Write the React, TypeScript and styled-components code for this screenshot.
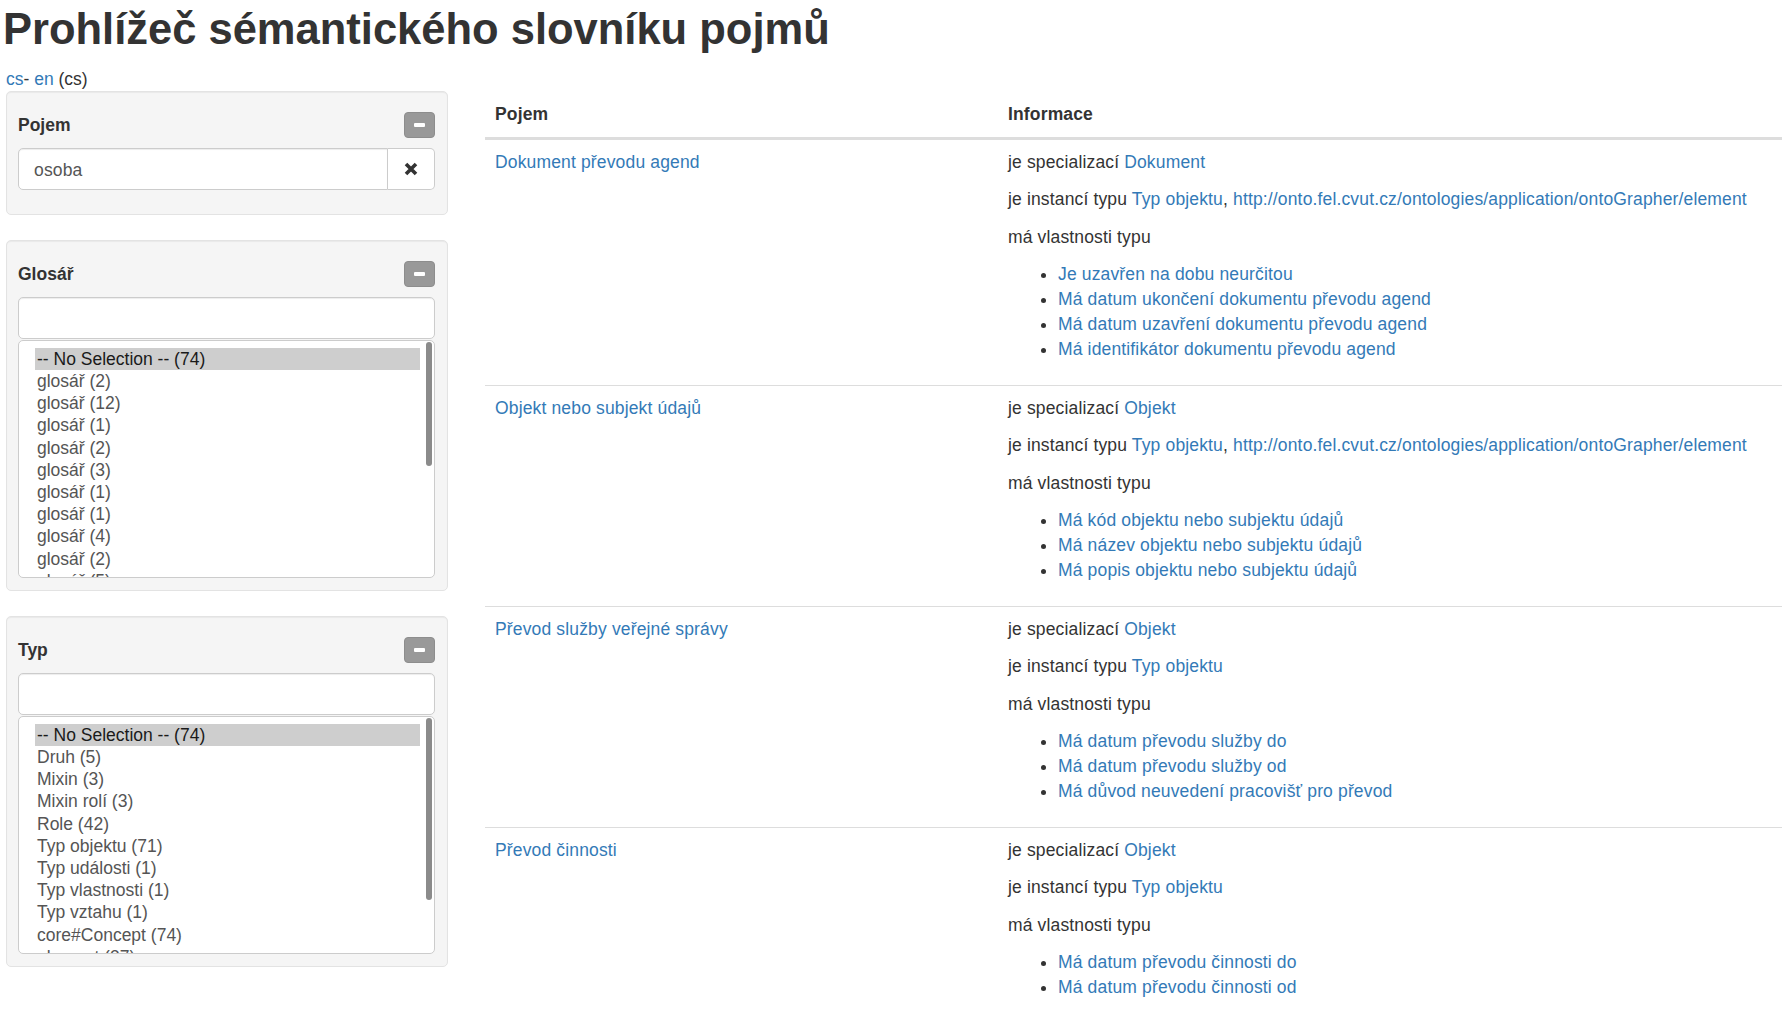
import React from "react";
import styled, { createGlobalStyle } from "styled-components";

const GlobalStyle = createGlobalStyle`
  html, body {
    margin: 0;
    padding: 0;
    background: #fff;
    overflow: hidden;
  }
  body {
    font-family: "Liberation Sans", Arial, Helvetica, sans-serif;
    font-size: 17.5px;
    line-height: 25px;
    color: #333;
  }
  * { box-sizing: border-box; }
`;

const Page = styled.div`
  padding-left: 6px;
`;

const Title = styled.h1`
  margin: 6px 0 13px -3px;
  font-size: 43.5px;
  font-weight: 700;
  line-height: 1.1;
  color: #333;
`;

const LangLine = styled.div`
  height: 24px;
  line-height: 25px;
`;

const Link = styled.a`
  color: #337ab7;
  text-decoration: none;
`;

const Layout = styled.div`
  display: grid;
  grid-template-columns: 442px 1fr;
  column-gap: 37px;
  align-items: start;
`;

const Sidebar = styled.aside`
  display: flex;
  flex-direction: column;
`;

const Well = styled.section`
  background: #f5f5f5;
  border: 1px solid #e3e3e3;
  border-radius: 5px;
  box-shadow: inset 0 1px 1px rgba(0, 0, 0, 0.05);
  padding: 20px 12px 12px 11px;
  margin-bottom: 25px;
`;

const WellHeader = styled.div`
  display: flex;
  justify-content: space-between;
  align-items: center;
  height: 26px;
  margin-bottom: 10px;
`;

const WellTitle = styled.h4`
  margin: 0;
  padding-top: 1px;
  font-size: 17.5px;
  font-weight: 700;
  line-height: 26px;
  color: #333;
`;

const CollapseButton = styled.button`
  width: 31px;
  height: 26px;
  padding: 0;
  border: 1px solid #8d8d8d;
  border-radius: 4px;
  background: #999;
  display: flex;
  align-items: center;
  justify-content: center;
`;

const MinusBar = styled.span`
  display: block;
  width: 11px;
  height: 4px;
  border-radius: 1px;
  background: #fff;
`;

const InputGroup = styled.div<{ $spaced?: boolean }>`
  display: flex;
  height: 42px;
  margin-bottom: ${(p) => (p.$spaced ? "12px" : "0")};
`;

const TextInput = styled.input<{ $grouped?: boolean }>`
  flex: 1;
  min-width: 0;
  height: 42px;
  padding: 3px 15px 0;
  border: 1px solid #ccc;
  border-radius: ${(p) => (p.$grouped ? "5px 0 0 5px" : "5px")};
  background: #fff;
  box-shadow: inset 0 1px 1px rgba(0, 0, 0, 0.075);
  font-family: inherit;
  font-size: 17.5px;
  letter-spacing: 0.15px;
  color: #555;
  outline: none;
`;

const ClearButton = styled.button`
  width: 47px;
  height: 42px;
  padding: 0;
  border: 1px solid #ccc;
  border-left: none;
  border-radius: 0 5px 5px 0;
  background: #fff;
  display: flex;
  align-items: center;
  justify-content: center;
`;

const Listbox = styled.div`
  position: relative;
  height: 238px;
  margin-top: 1px;
  padding: 7px 14px 0 16px;
  border: 1px solid #ccc;
  border-radius: 5px;
  background: #fff;
  overflow: hidden;
`;

const Option = styled.div<{ $selected?: boolean }>`
  font-size: 17.5px;
  line-height: 22.2px;
  padding: 0 2px;
  height: 22.2px;
  white-space: nowrap;
  color: ${(p) => (p.$selected ? "#1a1a1a" : "#555")};
  background: ${(p) => (p.$selected ? "#cecece" : "transparent")};
`;

const ScrollThumb = styled.div<{ $height: number }>`
  position: absolute;
  top: 1px;
  right: 2px;
  width: 6px;
  height: ${(p) => p.$height}px;
  border-radius: 3px;
  background: #8b8b8b;
`;

const Table = styled.table`
  width: 100%;
  margin-top: 1px;
  border-collapse: collapse;
  table-layout: fixed;
  letter-spacing: 0.15px;
`;

const HeadCell = styled.th<{ $width?: number }>`
  width: ${(p) => (p.$width ? `${p.$width}px` : "auto")};
  text-align: left;
  font-weight: 700;
  line-height: 25px;
  padding: 10px 10px;
  border-bottom: 3px solid #ddd;
  vertical-align: bottom;
`;

const Cell = styled.td`
  padding: 10px 10px;
  line-height: 25px;
  border-top: 1px solid #ddd;
  vertical-align: top;
`;

const InfoLine = styled.p`
  margin: 0 0 12.5px;
  white-space: nowrap;
`;

const PropList = styled.ul`
  margin: 0 0 12.5px;
  padding-left: 50px;
`;

const RemoveIcon = () => (
  <svg width="14" height="14" viewBox="0 0 14 14" aria-hidden="true">
    <path d="M2 2 L12 12 M12 2 L2 12" stroke="#333" strokeWidth="3.6" strokeLinecap="butt" />
  </svg>
);

type Concept = {
  name: string;
  spec: string;
  inst: string[];
  props: string[];
};

const URL = "http://onto.fel.cvut.cz/ontologies/application/ontoGrapher/element";

const concepts: Concept[] = [
  {
    name: "Dokument převodu agend",
    spec: "Dokument",
    inst: ["Typ objektu", URL],
    props: [
      "Je uzavřen na dobu neurčitou",
      "Má datum ukončení dokumentu převodu agend",
      "Má datum uzavření dokumentu převodu agend",
      "Má identifikátor dokumentu převodu agend",
    ],
  },
  {
    name: "Objekt nebo subjekt údajů",
    spec: "Objekt",
    inst: ["Typ objektu", URL],
    props: [
      "Má kód objektu nebo subjektu údajů",
      "Má název objektu nebo subjektu údajů",
      "Má popis objektu nebo subjektu údajů",
    ],
  },
  {
    name: "Převod služby veřejné správy",
    spec: "Objekt",
    inst: ["Typ objektu"],
    props: [
      "Má datum převodu služby do",
      "Má datum převodu služby od",
      "Má důvod neuvedení pracovišť pro převod",
    ],
  },
  {
    name: "Převod činnosti",
    spec: "Objekt",
    inst: ["Typ objektu"],
    props: ["Má datum převodu činnosti do", "Má datum převodu činnosti od"],
  },
];

const glossaries = [
  "-- No Selection -- (74)",
  "glosář (2)",
  "glosář (12)",
  "glosář (1)",
  "glosář (2)",
  "glosář (3)",
  "glosář (1)",
  "glosář (1)",
  "glosář (4)",
  "glosář (2)",
  "glosář (5)",
];

const types = [
  "-- No Selection -- (74)",
  "Druh (5)",
  "Mixin (3)",
  "Mixin rolí (3)",
  "Role (42)",
  "Typ objektu (71)",
  "Typ události (1)",
  "Typ vlastnosti (1)",
  "Typ vztahu (1)",
  "core#Concept (74)",
  "element (37)",
];

const FilterWell = ({ title, items, thumb }: { title: string; items: string[]; thumb: number }) => (
  <Well>
    <WellHeader>
      <WellTitle>{title}</WellTitle>
      <CollapseButton aria-label="Sbalit">
        <MinusBar />
      </CollapseButton>
    </WellHeader>
    <InputGroup>
      <TextInput />
    </InputGroup>
    <Listbox role="listbox">
      {items.map((it, i) => (
        <Option key={i} $selected={i === 0} role="option">
          {it}
        </Option>
      ))}
      <ScrollThumb $height={thumb} />
    </Listbox>
  </Well>
);

export default function App() {
  return (
    <>
      <GlobalStyle />
      <Page>
        <Title>Prohlížeč sémantického slovníku pojmů</Title>
        <LangLine>
          <Link href="#">cs</Link>- <Link href="#">en</Link> (cs)
        </LangLine>
        <Layout>
          <Sidebar>
            <Well>
              <WellHeader>
                <WellTitle>Pojem</WellTitle>
                <CollapseButton aria-label="Sbalit">
                  <MinusBar />
                </CollapseButton>
              </WellHeader>
              <InputGroup $spaced>
                <TextInput $grouped defaultValue="osoba" />
                <ClearButton aria-label="Vymazat">
                  <RemoveIcon />
                </ClearButton>
              </InputGroup>
            </Well>
            <FilterWell title="Glosář" items={glossaries} thumb={124} />
            <FilterWell title="Typ" items={types} thumb={182} />
          </Sidebar>
          <Table>
            <thead>
              <tr>
                <HeadCell $width={513}>Pojem</HeadCell>
                <HeadCell>Informace</HeadCell>
              </tr>
            </thead>
            <tbody>
              {concepts.map((c) => (
                <tr key={c.name}>
                  <Cell>
                    <Link href="#">{c.name}</Link>
                  </Cell>
                  <Cell>
                    <InfoLine>
                      je specializací <Link href="#">{c.spec}</Link>
                    </InfoLine>
                    <InfoLine>
                      je instancí typu{" "}
                      {c.inst.map((t, i) => (
                        <React.Fragment key={t}>
                          {i > 0 && ", "}
                          <Link href="#">{t}</Link>
                        </React.Fragment>
                      ))}
                    </InfoLine>
                    <InfoLine>má vlastnosti typu</InfoLine>
                    <PropList>
                      {c.props.map((p) => (
                        <li key={p}>
                          <Link href="#">{p}</Link>
                        </li>
                      ))}
                    </PropList>
                  </Cell>
                </tr>
              ))}
            </tbody>
          </Table>
        </Layout>
      </Page>
    </>
  );
}
